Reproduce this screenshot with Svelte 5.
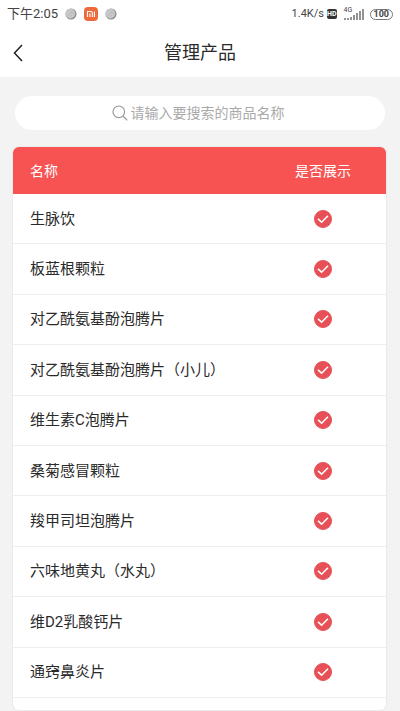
<script lang="ts">
  interface Product {
    name: string;
    shown: boolean;
  }

  let keyword = $state("");

  let products = $state<Product[]>([
    { name: "生脉饮", shown: true },
    { name: "板蓝根颗粒", shown: true },
    { name: "对乙酰氨基酚泡腾片", shown: true },
    { name: "对乙酰氨基酚泡腾片（小儿）", shown: true },
    { name: "维生素C泡腾片", shown: true },
    { name: "桑菊感冒颗粒", shown: true },
    { name: "羧甲司坦泡腾片", shown: true },
    { name: "六味地黄丸（水丸）", shown: true },
    { name: "维D2乳酸钙片", shown: true },
    { name: "通窍鼻炎片", shown: true },
  ]);

  let visible = $derived(products.filter((p) => p.name.includes(keyword.trim())));
</script>

{#snippet dot()}
  <svg class="dot" viewBox="0 0 12 12" aria-hidden="true">
    <circle cx="6" cy="6" r="5.5" fill="#8d8d8d" />
    <circle cx="5.4" cy="5.6" r="4.8" fill="#c8c8c8" />
    <path d="M3 7.5 7.5 3M4.5 9 9 4.5" stroke="#b4b4b4" stroke-width="0.8" />
  </svg>
{/snippet}

<div class="page">
  <div class="status">
    <div class="status-left">
      <span class="clock">下午2:05</span>
      {@render dot()}
      <svg class="mi" viewBox="0 0 14 14" aria-hidden="true">
        <rect width="14" height="14" rx="4" fill="#ee6a3a" />
        <path d="M3.5 10V4.5h3.2q1.6 0 1.6 1.6V10M5.9 6.5V10M10.4 4.5V10" fill="none" stroke="#fff" stroke-width="1.1" />
      </svg>
      {@render dot()}
    </div>
    <div class="status-right">
      <span class="speed">1.4K/s</span>
      <span class="hd">HD</span>
      <span class="signal">
        <span class="net">4G</span>
        <svg viewBox="0 0 20 11" aria-hidden="true">
          <path d="M1 11V9M4 11V9M7 11V8M10 11V6M13 11V4M16 11V2M19 11V0" stroke="#666" stroke-width="1.4" />
        </svg>
      </span>
      <span class="battery">100</span>
    </div>
  </div>

  <header class="nav">
    <button class="back" type="button" aria-label="返回">
      <svg viewBox="0 0 10 18" aria-hidden="true">
        <path d="M9 1 1.5 9 9 17" fill="none" stroke="#222" stroke-width="1.5" />
      </svg>
    </button>
    <h1>管理产品</h1>
  </header>

  <main>
    <label class="search">
      <svg viewBox="0 0 16 16" aria-hidden="true">
        <circle cx="6.8" cy="6.8" r="5.8" />
        <path d="M11 11l4.3 4.3" />
      </svg>
      <input type="text" bind:value={keyword} placeholder="请输入要搜索的商品名称" aria-label="搜索商品" />
    </label>

    <div class="card">
      <table>
        <thead>
          <tr>
            <th scope="col">名称</th>
            <th scope="col" class="show">是否展示</th>
          </tr>
        </thead>
        <tbody>
          {#each visible as product (product.name)}
            <tr>
              <td>{product.name}</td>
              <td class="show">
                <label class="tick">
                  <input type="checkbox" bind:checked={product.shown} aria-label={product.name} />
                  <svg viewBox="0 0 18 18" aria-hidden="true">
                    <path d="M4 8.8 7.6 12.2 14 5.8" />
                  </svg>
                </label>
              </td>
            </tr>
          {/each}
        </tbody>
      </table>
    </div>
  </main>
</div>

<style>
  :global(body) {
    margin: 0;
    background: #f3f3f3;
  }

  .page {
    height: 100vh;
    overflow: hidden;
    display: flex;
    flex-direction: column;
    background: #f3f3f3;
    color: #2a2a2a;
    font-family: Roboto, "Noto Sans CJK SC", sans-serif;
  }

  .status {
    display: flex;
    flex: none;
    align-items: center;
    justify-content: space-between;
    height: 28px;
    padding: 0 7px;
    background: #fff;
    color: #444;
  }

  .status-left,
  .status-right {
    display: flex;
    align-items: center;
  }

  .status-left {
    gap: 7px;
  }

  .status-right {
    gap: 3px;
  }

  .clock {
    font-size: 13px;
    line-height: 20px;
  }

  .speed {
    font-size: 11px;
    line-height: 20px;
  }

  .dot {
    width: 12px;
    height: 12px;
  }

  .mi {
    width: 14px;
    height: 14px;
  }

  .hd {
    border-radius: 2px;
    background: #333;
    color: #fff;
    font-size: 7px;
    font-weight: 700;
    line-height: 10px;
  }

  .signal {
    position: relative;
    margin: 0 3px 0 4px;
  }

  .signal svg {
    display: block;
    width: 20px;
    height: 11px;
  }

  .net {
    position: absolute;
    top: -2px;
    left: 0;
    font-size: 7px;
    line-height: 7px;
  }

  .battery {
    padding: 0 3px;
    border: 1px solid #777;
    border-radius: 6px;
    font-size: 9px;
    font-weight: 700;
    line-height: 9px;
  }

  .nav {
    display: grid;
    flex: none;
    grid-template-columns: 40px 1fr 40px;
    align-items: center;
    height: 49px;
    background: #fff;
  }

  .back {
    display: flex;
    padding: 8px 13px;
    border: 0;
    background: none;
    cursor: pointer;
  }

  .back svg {
    width: 10px;
    height: 18px;
  }

  h1 {
    margin: 0;
    font-size: 18px;
    font-weight: 400;
    line-height: 24px;
    text-align: center;
  }

  main {
    flex: 1;
    min-height: 0;
    overflow: hidden;
    padding: 19px 14px 0 13px;
  }

  .search {
    display: flex;
    align-items: center;
    justify-content: center;
    gap: 3px;
    height: 34px;
    margin: 0 1px 17px 2px;
    border-radius: 17px;
    background: #fff;
  }

  .search svg {
    width: 16px;
    height: 16px;
    fill: none;
    stroke: #999;
    stroke-width: 1.2;
  }

  .search input {
    width: 158px;
    padding: 0;
    border: 0;
    outline: 0;
    background: none;
    color: #222;
    font: inherit;
    font-size: 14px;
    line-height: 20px;
  }

  .search input::placeholder {
    color: #aaa;
    opacity: 1;
  }

  .card {
    overflow: hidden;
    padding-bottom: 12px;
    border-radius: 6px;
    background: #fff;
    box-shadow: 0 0 2px rgba(0, 0, 0, 0.12);
  }

  table {
    width: 100%;
    height: 551px;
    border-collapse: separate;
    border-spacing: 0;
  }

  th,
  td {
    padding: 0 17px;
    text-align: left;
    vertical-align: middle;
  }

  th {
    height: 47px;
    background: #f75353;
    color: #fff;
    font-size: 14px;
    font-weight: 400;
    line-height: 20px;
  }

  td {
    border-bottom: 1px solid #eee;
    font-size: 15px;
    line-height: 20px;
  }

  .show {
    width: 92px;
    text-align: center;
  }

  .tick {
    display: grid;
    width: 18px;
    margin: 0 auto;
    cursor: pointer;
  }

  .tick input,
  .tick svg {
    grid-area: 1 / 1;
    width: 18px;
    height: 18px;
  }

  .tick input {
    margin: 0;
    appearance: none;
    border: 1px solid #ccc;
    border-radius: 50%;
  }

  .tick input:checked {
    border-color: #e65056;
    background: #e65056;
  }

  .tick svg {
    fill: none;
    stroke: #fff;
    stroke-width: 1.6;
    pointer-events: none;
  }
</style>
